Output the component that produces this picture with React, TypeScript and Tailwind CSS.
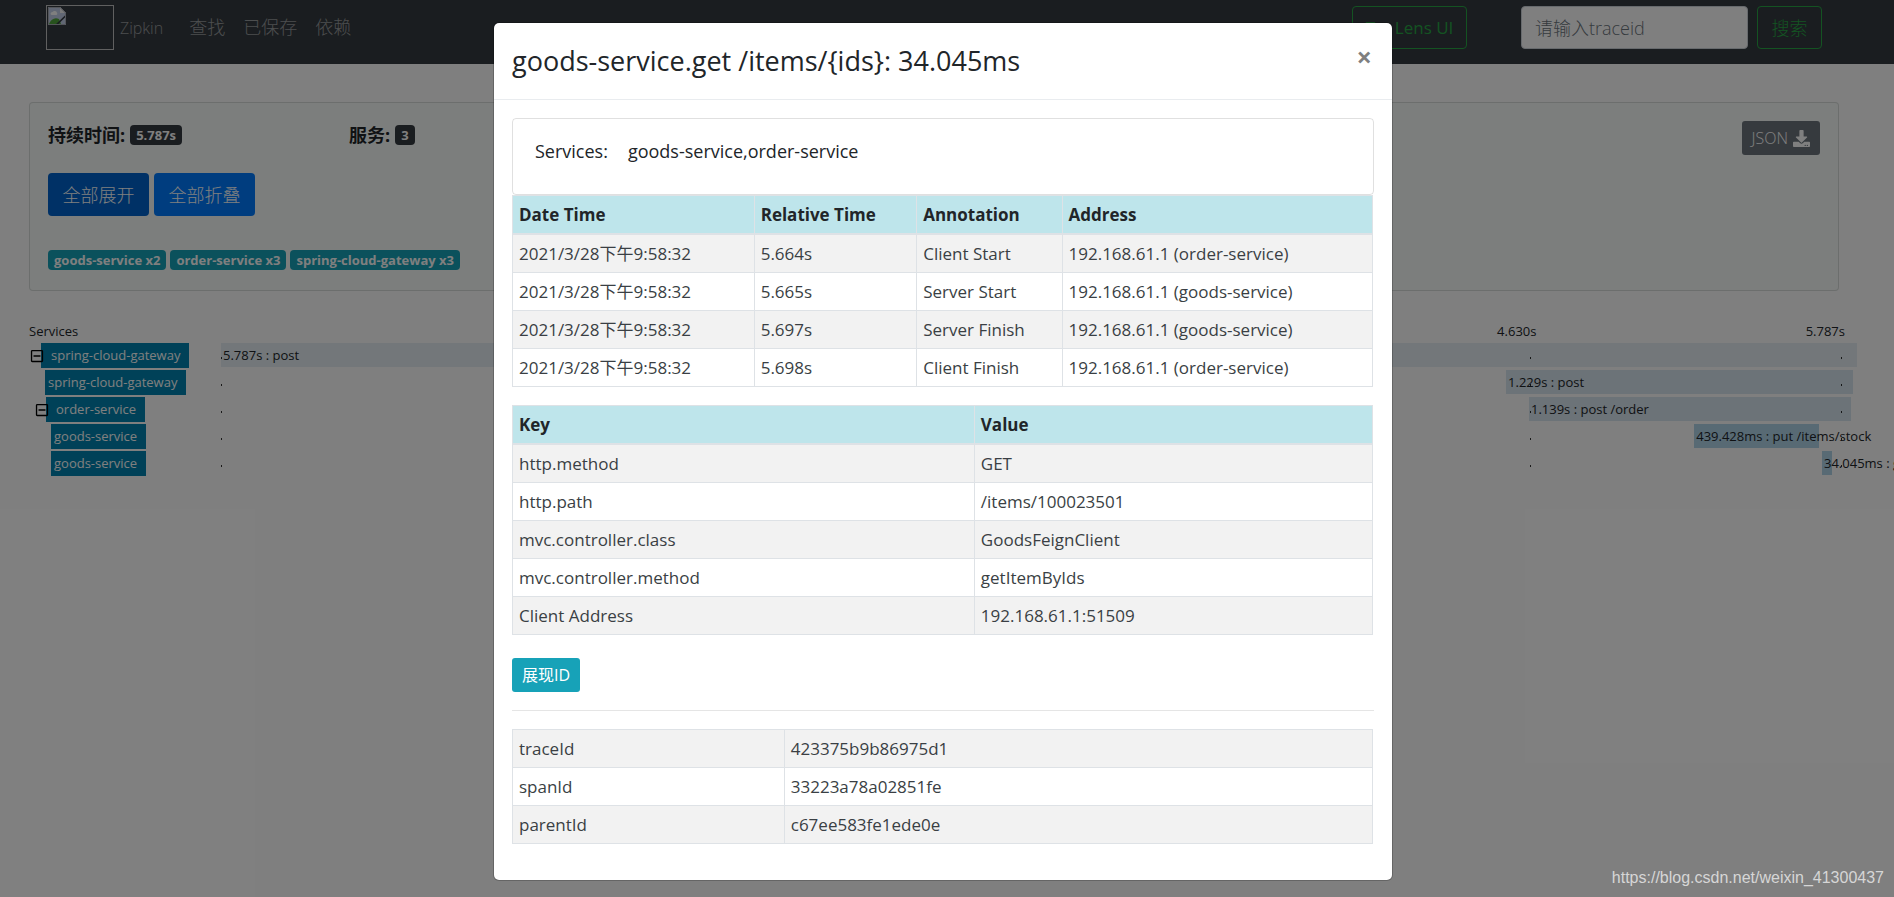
import type { ReactNode } from "react";
import { FaDownload, FaRegMinusSquare } from "react-icons/fa";

const annotations = [
  ["2021/3/28下午9:58:32", "5.664s", "Client Start", "192.168.61.1 (order-service)"],
  ["2021/3/28下午9:58:32", "5.665s", "Server Start", "192.168.61.1 (goods-service)"],
  ["2021/3/28下午9:58:32", "5.697s", "Server Finish", "192.168.61.1 (goods-service)"],
  ["2021/3/28下午9:58:32", "5.698s", "Client Finish", "192.168.61.1 (order-service)"],
];

const tags = [
  ["http.method", "GET"],
  ["http.path", "/items/100023501"],
  ["mvc.controller.class", "GoodsFeignClient"],
  ["mvc.controller.method", "getItemByIds"],
  ["Client Address", "192.168.61.1:51509"],
];

const ids = [
  ["traceId", "423375b9b86975d1"],
  ["spanId", "33223a78a02851fe"],
  ["parentId", "c67ee583fe1ede0e"],
];

const spans = [
  { service: "spring-cloud-gateway", indent: "pl-px", open: true, start: 0, width: 100, color: "bg-[#e6eff4]", label: "5.787s : post" },
  { service: "spring-cloud-gateway", indent: "pl-4", open: false, start: 78.55, width: 21.2, color: "bg-[#d8e6f0]", label: "1.229s : post" },
  { service: "order-service", indent: "pl-1.5", open: true, start: 79.95, width: 19.7, color: "bg-[#d8e6f0]", label: "1.139s : post /order" },
  { service: "goods-service", indent: "pl-[22px]", open: false, start: 90.05, width: 7.6, color: "bg-[#b0d4e8]", label: "439.428ms : put /items/stock" },
  { service: "goods-service", indent: "pl-[22px]", open: false, start: 97.86, width: 0.6, color: "bg-[#b0d4e8]", label: "34.045ms : get /items/{ids}" },
];

function DataTable({ head, rows, widths }: { head?: string[]; rows: string[][]; widths: string[] }) {
  return (
    <table className="w-full table-fixed border-collapse border border-[#dee2e6] font-normal">
      <colgroup>
        {widths.map((w, i) => (
          <col key={i} className={w} />
        ))}
      </colgroup>
      {head && (
        <thead>
          <tr className="bg-[#bee5eb]">
            {head.map((h) => (
              <th key={h} scope="col" className="border border-b-2 border-[#dee2e6] px-1.5 py-[5px] text-left font-bold">
                {h}
              </th>
            ))}
          </tr>
        </thead>
      )}
      <tbody className="text-[#3a3f44]">
        {rows.map((row, r) => (
          <tr key={r} className="odd:bg-[#f2f2f2]">
            {row.map((cell, c) => (
              <td key={c} className="border border-[#dee2e6] px-1.5 py-[5px]">
                {cell}
              </td>
            ))}
          </tr>
        ))}
      </tbody>
    </table>
  );
}

function Badge({ color, children }: { color: string; children: ReactNode }) {
  return (
    <span className={`inline-block rounded px-1.5 text-[13px] leading-5 font-bold text-white ${color}`}>{children}</span>
  );
}

function BrokenImage() {
  return (
    <span role="img" aria-label="logo" className="block h-[45px] w-[68px] border border-[#c0c0c0] p-px">
      <svg viewBox="0 0 18 18" className="size-[18px]" aria-hidden="true">
        <path d="M0 0h12l6 6v12H0z" fill="#c3cfe8" />
        <path d="M12 0v6h6z" fill="#f4f4f4" />
        <path d="M2.5 7a2 2 0 0 1 2-2 2.5 2.5 0 0 1 4.500.8A1.500 1.500 0 0 1 8.500 8H3.500z" fill="#fff" />
        <path d="M1 17c2-5 6-7 10-5l2 5z" fill="#4fa53a" />
        <path d="M18 7.500v2L9.500 18H7z" fill="#343a40" />
        <path d="M.5.5h11.500l5.500 5.500v11.500H.5z" fill="none" stroke="#a9adb5" />
      </svg>
    </span>
  );
}

function Navbar() {
  const link = "text-lg leading-[27px] text-white/50";
  return (
    <nav className="flex h-16 items-start bg-[#343a40] pt-[5px] pr-[72px] pl-[46px]">
      <a href="#home" className="flex items-center gap-1.5 text-base text-white/50">
        <BrokenImage />
        Zipkin
      </a>
      <div className="ml-[26px] flex h-[45px] items-center gap-[18px]">
        <a href="#find" className={link}>查找</a>
        <a href="#saved" className={link}>已保存</a>
        <a href="#dependency" className={link}>依赖</a>
      </div>
      <form className="mt-px ml-auto flex items-center" onSubmit={(e) => e.preventDefault()}>
        <button type="button" className="mr-[54px] h-[43px] w-[115px] rounded border border-[#28a745] text-[17px] font-normal text-[#28a745]">
          Try Lens UI
        </button>
        <input
          type="text"
          aria-label="traceid"
          placeholder="请输入traceid"
          className="mr-[9px] h-[43px] w-[227px] rounded border border-[#ced4da] bg-white px-[13px] text-lg placeholder:text-[#6c757d]"
        />
        <button type="submit" className="h-[43px] w-[65px] rounded border border-[#28a745] text-lg text-[#28a745]">
          搜索
        </button>
      </form>
    </nav>
  );
}

function Summary() {
  return (
    <section className="mt-[38px] mr-[55px] ml-[29px] flex h-[189px] items-start justify-between rounded border border-black/12 bg-[#f8fcfa] p-[18px]">
      <div>
        <div className="flex h-7 items-center text-lg font-bold">
          <div className="flex w-[301px] items-center gap-[5px]">
            持续时间: <Badge color="bg-[#343a40]">5.787s</Badge>
          </div>
          <div className="flex items-center gap-[5px]">
            服务: <Badge color="bg-[#343a40]">3</Badge>
          </div>
        </div>
        <div className="mt-6 flex gap-[5px]">
          <button type="button" className="h-[43px] w-[101px] rounded bg-[#0062cc] text-lg text-white">全部展开</button>
          <button type="button" className="h-[43px] w-[101px] rounded bg-[#007bff] text-lg text-white">全部折叠</button>
        </div>
        <div className="mt-[34px] flex gap-1">
          <Badge color="bg-[#17a2b8]">goods-service x2</Badge>
          <Badge color="bg-[#17a2b8]">order-service x3</Badge>
          <Badge color="bg-[#17a2b8]">spring-cloud-gateway x3</Badge>
        </div>
      </div>
      <button type="button" className="flex h-[34px] items-center gap-[5px] rounded-[3px] bg-[#6c757d] px-2.5 text-base text-white">
        JSON <FaDownload className="size-[17px]" />
      </button>
    </section>
  );
}

function Timeline() {
  return (
    <section className="mt-[30px] mr-[37px] ml-[29px] text-[13px] leading-5 font-normal">
      <div className="flex pb-0.5">
        <div className="w-48">Services</div>
        <div className="flex flex-1 pr-3">
          <span className="w-[81%] text-right">4.630s</span>
          <span className="flex-1 text-right">5.787s</span>
        </div>
      </div>
      {spans.map((s, i) => (
        <div key={i} className="flex h-[27px] items-start">
          <div className={`flex w-48 items-center ${s.indent}`}>
            {s.open && <FaRegMinusSquare className="relative -mr-[3px] size-3.5 text-black" />}
            <span className={`h-[25px] bg-[#0083b0] pr-[9px] leading-[25px] text-white ${s.open ? "pl-2.5" : "pl-[3px]"}`}>
              {s.service}
            </span>
          </div>
          <div className="relative h-[25px] flex-1">
            <div
              className={`h-6 pl-0.5 leading-[25px] whitespace-nowrap ${s.color}`}
              style={{ marginLeft: `${s.start}%`, width: `${s.width}%` }}
            >
              {s.label}
            </div>
            <span className="absolute top-3.5 left-0 h-0.5 w-px bg-black/80" />
            <span className="absolute top-3.5 left-[80%] h-0.5 w-px bg-black/80" />
            <span className="absolute top-3.5 right-[15px] h-0.5 w-px bg-black/80" />
          </div>
        </div>
      ))}
    </section>
  );
}

function SpanDialog() {
  return (
    <div
      role="dialog"
      aria-modal="true"
      aria-labelledby="span-title"
      className="w-full max-w-[900px] rounded-md border border-black/20 bg-white bg-clip-padding"
    >
      <header className="flex items-start justify-between border-b border-[#e9ecef] p-[18px]">
        <h4 id="span-title" className="text-[27px] leading-10 font-normal">goods-service.get /items/&#123;ids&#125;: 34.045ms</h4>
        <button type="button" aria-label="Close" className="px-0.5 text-[27px] leading-8 font-bold text-black/50">×</button>
      </header>
      <div className="p-[18px]">
        <div className="flex h-[77px] gap-5 rounded border border-black/12 px-[22px] pt-[19px] text-lg leading-[27px] font-normal">
          <span>Services:</span>
          <span>goods-service,order-service</span>
        </div>
        <div className="pr-px">
          <DataTable
            head={["Date Time", "Relative Time", "Annotation", "Address"]}
            rows={annotations}
            widths={["w-[28.1%]", "w-[18.9%]", "w-[16.9%]", "w-[36.1%]"]}
          />
        </div>
        <div className="mt-[18px] pr-px">
          <DataTable head={["Key", "Value"]} rows={tags} widths={["w-[53.7%]", "w-[46.3%]"]} />
        </div>
        <button type="button" className="mt-[23px] block h-[34px] rounded-[3px] bg-[#17a2b8] px-2.5 text-base font-normal text-white">
          展现ID
        </button>
        <hr className="my-[18px] border-black/10" />
        <div className="mb-[18px] pr-px">
          <DataTable rows={ids} widths={["w-[31.6%]", "w-[68.4%]"]} />
        </div>
      </div>
    </div>
  );
}

export default function App() {
  return (
    <div className="relative min-h-screen overflow-hidden bg-white font-['Open_Sans','Noto_Sans_CJK_SC',sans-serif] text-[17px] leading-[27px] font-light text-[#212529]">
      <Navbar />
      <Summary />
      <Timeline />
      <div className="absolute inset-0 flex items-start justify-center bg-black/50 pt-[22px] pr-2">
        <SpanDialog />
      </div>
      <a
        href="https://blog.csdn.net/weixin_41300437"
        className="absolute right-2.5 bottom-[7px] font-['Liberation_Sans',sans-serif] text-base leading-6 font-normal text-[#d6d6d6]"
      >
        https://blog.csdn.net/weixin_41300437
      </a>
    </div>
  );
}
